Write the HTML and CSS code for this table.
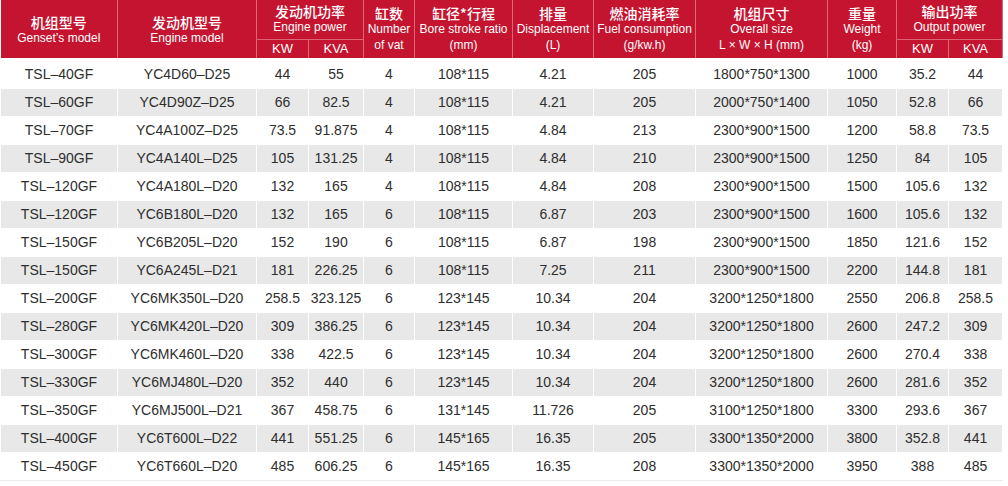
FILE: index.html
```html
<!DOCTYPE html>
<html lang="zh">
<head>
<meta charset="utf-8">
<title>Genset specifications</title>
<link rel="stylesheet" href="styles.css">
</head>
<body>
<table class="spec">
  <colgroup>
    <col class="c1"><col class="c2"><col class="c3"><col class="c4"><col class="c5"><col class="c6">
    <col class="c7"><col class="c8"><col class="c9"><col class="c10"><col class="c11"><col class="c12">
  </colgroup>
  <thead>
    <tr class="h1">
      <th rowspan="2" class="two"><span class="cn">机组型号</span><span class="en">Genset’s model</span></th>
      <th rowspan="2" class="two"><span class="cn">发动机型号</span><span class="en">Engine model</span></th>
      <th colspan="2" class="grp"><span class="cn">发动机功率</span><span class="en">Engine power</span></th>
      <th rowspan="2"><span class="cn">缸数</span><span class="en">Number</span><span class="en">of vat</span></th>
      <th rowspan="2"><span class="cn">缸径*行程</span><span class="en">Bore stroke ratio</span><span class="en">(mm)</span></th>
      <th rowspan="2"><span class="cn">排量</span><span class="en">Displacement</span><span class="en">(L)</span></th>
      <th rowspan="2"><span class="cn">燃油消耗率</span><span class="en">Fuel consumption</span><span class="en">(g/kw.h)</span></th>
      <th rowspan="2"><span class="cn">机组尺寸</span><span class="en">Overall size</span><span class="en">L × W × H (mm)</span></th>
      <th rowspan="2"><span class="cn">重量</span><span class="en">Weight</span><span class="en">(kg)</span></th>
      <th colspan="2" class="grp"><span class="cn">输出功率</span><span class="en">Output power</span></th>
    </tr>
    <tr class="h2">
      <th class="sub">KW</th><th class="sub">KVA</th><th class="sub">KW</th><th class="sub">KVA</th>
    </tr>
  </thead>
  <tbody>
    <tr><td>TSL–40GF</td><td>YC4D60–D25</td><td>44</td><td>55</td><td>4</td><td>108*115</td><td>4.21</td><td>205</td><td>1800*750*1300</td><td>1000</td><td>35.2</td><td>44</td></tr>
    <tr><td>TSL–60GF</td><td>YC4D90Z–D25</td><td>66</td><td>82.5</td><td>4</td><td>108*115</td><td>4.21</td><td>205</td><td>2000*750*1400</td><td>1050</td><td>52.8</td><td>66</td></tr>
    <tr><td>TSL–70GF</td><td>YC4A100Z–D25</td><td>73.5</td><td>91.875</td><td>4</td><td>108*115</td><td>4.84</td><td>213</td><td>2300*900*1500</td><td>1200</td><td>58.8</td><td>73.5</td></tr>
    <tr><td>TSL–90GF</td><td>YC4A140L–D25</td><td>105</td><td>131.25</td><td>4</td><td>108*115</td><td>4.84</td><td>210</td><td>2300*900*1500</td><td>1250</td><td>84</td><td>105</td></tr>
    <tr><td>TSL–120GF</td><td>YC4A180L–D20</td><td>132</td><td>165</td><td>4</td><td>108*115</td><td>4.84</td><td>208</td><td>2300*900*1500</td><td>1500</td><td>105.6</td><td>132</td></tr>
    <tr><td>TSL–120GF</td><td>YC6B180L–D20</td><td>132</td><td>165</td><td>6</td><td>108*115</td><td>6.87</td><td>203</td><td>2300*900*1500</td><td>1600</td><td>105.6</td><td>132</td></tr>
    <tr><td>TSL–150GF</td><td>YC6B205L–D20</td><td>152</td><td>190</td><td>6</td><td>108*115</td><td>6.87</td><td>198</td><td>2300*900*1500</td><td>1850</td><td>121.6</td><td>152</td></tr>
    <tr><td>TSL–150GF</td><td>YC6A245L–D21</td><td>181</td><td>226.25</td><td>6</td><td>108*115</td><td>7.25</td><td>211</td><td>2300*900*1500</td><td>2200</td><td>144.8</td><td>181</td></tr>
    <tr><td>TSL–200GF</td><td>YC6MK350L–D20</td><td>258.5</td><td>323.125</td><td>6</td><td>123*145</td><td>10.34</td><td>204</td><td>3200*1250*1800</td><td>2550</td><td>206.8</td><td>258.5</td></tr>
    <tr><td>TSL–280GF</td><td>YC6MK420L–D20</td><td>309</td><td>386.25</td><td>6</td><td>123*145</td><td>10.34</td><td>204</td><td>3200*1250*1800</td><td>2600</td><td>247.2</td><td>309</td></tr>
    <tr><td>TSL–300GF</td><td>YC6MK460L–D20</td><td>338</td><td>422.5</td><td>6</td><td>123*145</td><td>10.34</td><td>204</td><td>3200*1250*1800</td><td>2600</td><td>270.4</td><td>338</td></tr>
    <tr><td>TSL–330GF</td><td>YC6MJ480L–D20</td><td>352</td><td>440</td><td>6</td><td>123*145</td><td>10.34</td><td>204</td><td>3200*1250*1800</td><td>2600</td><td>281.6</td><td>352</td></tr>
    <tr><td>TSL–350GF</td><td>YC6MJ500L–D21</td><td>367</td><td>458.75</td><td>6</td><td>131*145</td><td>11.726</td><td>205</td><td>3100*1250*1800</td><td>3300</td><td>293.6</td><td>367</td></tr>
    <tr><td>TSL–400GF</td><td>YC6T600L–D22</td><td>441</td><td>551.25</td><td>6</td><td>145*165</td><td>16.35</td><td>205</td><td>3300*1350*2000</td><td>3800</td><td>352.8</td><td>441</td></tr>
    <tr><td>TSL–450GF</td><td>YC6T660L–D20</td><td>485</td><td>606.25</td><td>6</td><td>145*165</td><td>16.35</td><td>208</td><td>3300*1350*2000</td><td>3950</td><td>388</td><td>485</td></tr>
  </tbody>
</table>
</body>
</html>
```

FILE: styles.css
```css
html, body {
  margin: 0;
  padding: 0;
  background: #ffffff;
}

.spec {
  width: 1002px;
  table-layout: fixed;
  border-collapse: collapse;
  font-family: "Liberation Sans", Arial, "Noto Sans CJK SC", sans-serif;
}

.c1 { width: 117px; }
.c2 { width: 139px; }
.c3 { width: 52px; }
.c4 { width: 55px; }
.c5 { width: 51px; }
.c6 { width: 98px; }
.c7 { width: 81px; }
.c8 { width: 102px; }
.c9 { width: 132px; }
.c10 { width: 69px; }
.c11 { width: 52px; }
.c12 { width: 54px; }

.spec th {
  background: #c5142f;
  color: #ffffff;
  font-weight: normal;
  border: 1px solid #dc6676;
  border-top: none;
  padding: 0;
  text-align: center;
  vertical-align: middle;
  line-height: 16px;
  white-space: nowrap;
}

.spec th:first-child {
  border-left: none;
}

.spec th.two {
  padding-top: 3px;
}

.spec .h1 {
  height: 39px;
}

.spec .h2 {
  height: 20px;
}

.spec .cn {
  display: block;
  font-family: "Noto Sans CJK SC", sans-serif;
  font-size: 14px;
  font-weight: 500;
  line-height: 16px;
}

.spec .en {
  display: block;
  font-family: "Liberation Sans", Arial, sans-serif;
  font-size: 12px;
  line-height: 16px;
}

.spec th.sub {
  font-size: 13px;
  line-height: 18px;
  border-bottom: none;
}

.spec td {
  height: 27px;
  padding: 0;
  text-align: center;
  vertical-align: middle;
  font-size: 14px;
  color: #2e2e2e;
  border: 1px solid #ffffff;
  white-space: nowrap;
}

.spec tbody tr:first-child td {
  border-top: 3px solid #ffffff;
}

.spec tbody tr:nth-child(even) td {
  background: #e8e8e8;
}

.spec tbody tr:last-child td {
  border-bottom: 1px solid #ececec;
}
```
